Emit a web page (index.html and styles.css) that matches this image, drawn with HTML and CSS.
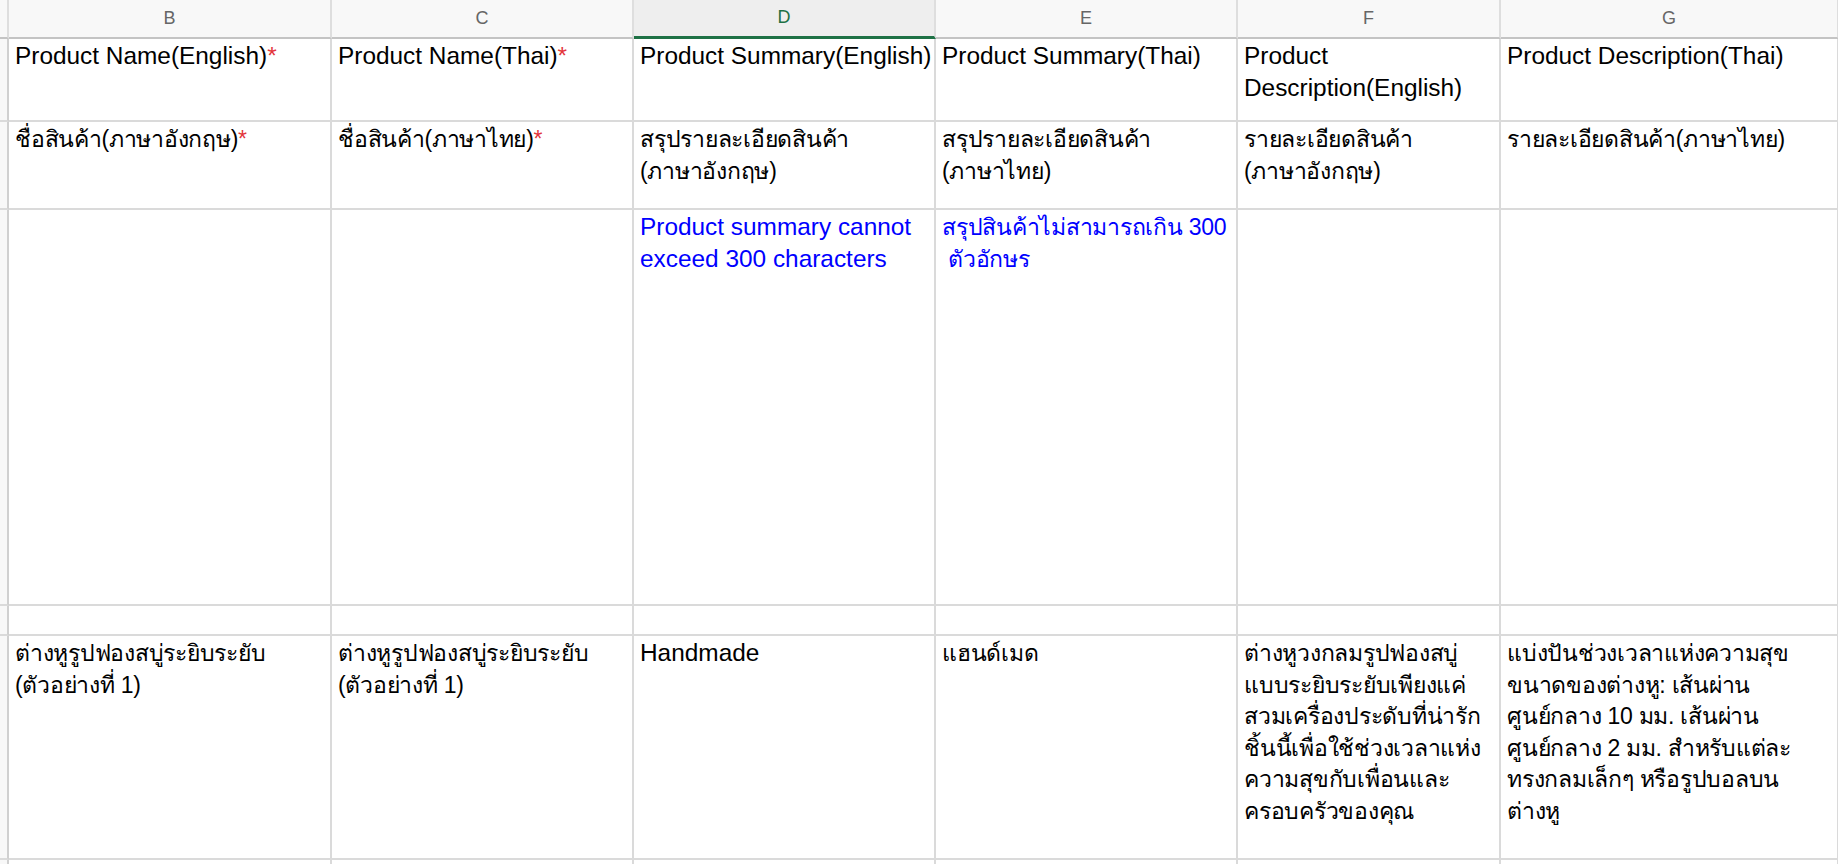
FILE: index.html
```html
<!DOCTYPE html>
<html lang="th">
<head>
<meta charset="utf-8">
<title>Product sheet</title>
<link rel="stylesheet" href="styles.css">
</head>
<body>
<div class="sheet">
  <div class="corner"></div>
  <div class="colhead">B</div>
  <div class="colhead">C</div>
  <div class="colhead selected">D</div>
  <div class="colhead">E</div>
  <div class="colhead">F</div>
  <div class="colhead">G</div>

  <div class="rowhead"></div>
  <div class="cell">Product Name(English)<span class="req">*</span></div>
  <div class="cell">Product Name(Thai)<span class="req">*</span></div>
  <div class="cell">Product Summary(English)</div>
  <div class="cell">Product Summary(Thai)</div>
  <div class="cell">Product Description(English)</div>
  <div class="cell">Product Description(Thai)</div>

  <div class="rowhead"></div>
  <div class="cell th">ชื่อสินค้า(ภาษาอังกฤษ)<span class="req">*</span></div>
  <div class="cell th">ชื่อสินค้า(ภาษาไทย)<span class="req">*</span></div>
  <div class="cell th">สรุปรายละเอียดสินค้า<br>(ภาษาอังกฤษ)</div>
  <div class="cell th">สรุปรายละเอียดสินค้า<br>(ภาษาไทย)</div>
  <div class="cell th">รายละเอียดสินค้า<br>(ภาษาอังกฤษ)</div>
  <div class="cell th">รายละเอียดสินค้า(ภาษาไทย)</div>

  <div class="rowhead"></div>
  <div class="cell"></div>
  <div class="cell"></div>
  <div class="cell note">Product summary cannot exceed 300 characters</div>
  <div class="cell th note">สรุปสินค้าไม่สามารถเกิน 300<br>&nbsp;ตัวอักษร</div>
  <div class="cell"></div>
  <div class="cell"></div>

  <div class="rowhead"></div>
  <div class="cell"></div>
  <div class="cell"></div>
  <div class="cell"></div>
  <div class="cell"></div>
  <div class="cell"></div>
  <div class="cell"></div>

  <div class="rowhead"></div>
  <div class="cell th">ต่างหูรูปฟองสบู่ระยิบระยับ<br>(ตัวอย่างที่ 1)</div>
  <div class="cell th">ต่างหูรูปฟองสบู่ระยิบระยับ<br>(ตัวอย่างที่ 1)</div>
  <div class="cell">Handmade</div>
  <div class="cell th">แฮนด์เมด</div>
  <div class="cell th">ต่างหูวงกลมรูปฟองสบู่<br>แบบระยิบระยับเพียงแค่<br>สวมเครื่องประดับที่น่ารัก<br>ชิ้นนี้เพื่อใช้ช่วงเวลาแห่ง<br>ความสุขกับเพื่อนและ<br>ครอบครัวของคุณ</div>
  <div class="cell th">แบ่งปันช่วงเวลาแห่งความสุข<br>ขนาดของต่างหู: เส้นผ่าน<br>ศูนย์กลาง 10 มม. เส้นผ่าน<br>ศูนย์กลาง 2 มม. สำหรับแต่ละ<br>ทรงกลมเล็กๆ หรือรูปบอลบน<br>ต่างหู</div>

  <div class="rowhead"></div>
  <div class="cell"></div>
  <div class="cell"></div>
  <div class="cell"></div>
  <div class="cell"></div>
  <div class="cell"></div>
  <div class="cell"></div>
</div>
</body>
</html>
```

FILE: styles.css
```css
html, body {
  margin: 0;
  padding: 0;
  background: #ffffff;
}

body {
  width: 1838px;
  height: 864px;
  overflow: hidden;
  font-family: "Liberation Sans", Arial, sans-serif;
}

.sheet {
  display: grid;
  grid-template-columns: 9px 323px 302px 302px 302px 263px 338px;
  grid-template-rows: 39px 83px 88px 396px 30px 224px 40px;
  width: 1839px;
}

.corner,
.colhead {
  box-sizing: border-box;
  background: #f8f8f8;
  border-right: 2px solid #dedede;
  border-bottom: 2px solid #c4c4c4;
}

.colhead {
  display: flex;
  align-items: center;
  justify-content: center;
  font-size: 18px;
  color: #666666;
  padding-bottom: 1px;
}

.colhead.selected {
  background: #eeeeee;
  color: #1e7145;
  border-bottom: 3px solid #1e7145;
}

.rowhead {
  box-sizing: border-box;
  background: #f8f8f8;
  border-right: 2px solid #d0d0d0;
  border-bottom: 2px solid #dadada;
}

.cell {
  box-sizing: border-box;
  border-right: 2px solid #dadada;
  border-bottom: 2px solid #dadada;
  padding: 1px 0 0 6px;
  font-size: 24.4px;
  line-height: 31.6px;
  color: #000000;
  overflow: hidden;
}

.cell.th {
  white-space: nowrap;
  font-size: 23px;
  letter-spacing: -0.25px;
  padding-top: 2px;
}

.req {
  color: #e3363c;
}

.note {
  color: #0000ff;
}
```
